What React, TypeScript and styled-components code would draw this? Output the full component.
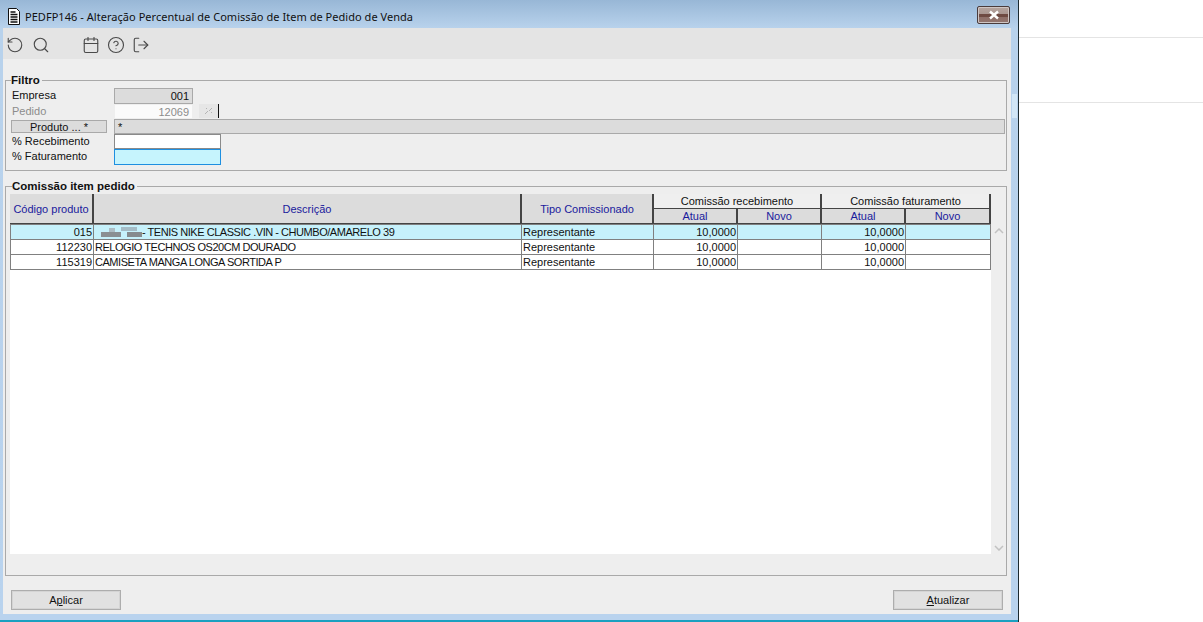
import React from "react";
import styled, { createGlobalStyle } from "styled-components";
import { RotateCcw, Search, Calendar, CircleHelp, LogOut } from "lucide-react";

const Global = createGlobalStyle`
  html, body { margin: 0; padding: 0; background: #fff; }
  * { box-sizing: border-box; }
  body { font-family: "Liberation Sans", Arial, sans-serif; font-size: 11px; color: #111; }
`;

const Page = styled.div`
  display: flex;
  width: 1203px;
  height: 622px;
  overflow: hidden;
`;
const Window = styled.div`
  position: relative;
  flex: 0 0 1019px;
  height: 622px;
  display: flex;
  flex-direction: column;
  padding-bottom: 2px;
  border-right: 1px solid #1c2a30;
  background: linear-gradient(180deg, #98b7d6 0, #b8d2ec 28px, #b9d3ee 100%);
  &::after {
    content: "";
    position: absolute;
    left: 0;
    right: 0;
    bottom: 0;
    height: 2px;
    background: #1aa0c0;
  }
`;
const SideGlint = styled.div`
  position: absolute;
  left: 1012px;
  top: 94px;
  width: 5px;
  height: 24px;
  background: #d2e6f6;
`;
const TitleBar = styled.div`
  flex: 0 0 28px;
  display: flex;
  align-items: center;
  padding: 4px 8px 0 8px;
  gap: 5px;
`;
const TitleText = styled.div`
  flex: 1;
  font-family: "Noto Sans", "Open Sans", sans-serif;
  font-size: 11px;
  letter-spacing: 0.04px;
  color: #111;
`;
const CloseButton = styled.div`
  width: 33px;
  height: 18px;
  margin-top: -3px;
  border: 1px solid #4a3c3c;
  border-radius: 2px;
  box-shadow: inset 0 0 0 1px #cfc6c4;
  background: linear-gradient(180deg, #b5a5a0 0, #a99690 45%, #6e4a42 46%, #6e4a42 62%, #8e6f68 63%, #927670 100%);
  display: flex;
  align-items: center;
  justify-content: center;
`;
const Body = styled.div`
  flex: 1;
  margin: 0 7px 6px 3px;
  background: #eeeeee;
  display: flex;
  flex-direction: column;
  min-height: 0;
`;
const Toolbar = styled.div`
  flex: 0 0 31px;
  background: #e4e4e4;
  display: flex;
  align-items: center;
  padding: 2px 0 0 3px;
  color: #4a4a4a;
`;
const ToolIcon = styled.span<{ $gap?: number }>`
  display: flex;
  width: 18px;
  margin-left: ${(p) => p.$gap ?? 0}px;
  justify-content: center;
`;
const Group = styled.fieldset`
  margin: 0 4px 0 2px;
  padding: 0 0 0 6px;
  border: 1px solid #a9a9a9;
  min-width: 0;
  border-radius: 0;
`;
const Legend = styled.legend`
  padding: 0 2px 0 0;
  margin-left: -1px;
  font-weight: 700;
  font-size: 11.5px;
  line-height: 13px;
  color: #111;
`;
const FilterGroup = styled(Group)`
  margin-top: 15px;
  height: 97px;
  padding-top: 1px;
`;
const FilterRow = styled.div<{ $h: number }>`
  display: flex;
  height: ${(p) => p.$h}px;
`;
const FormLabel = styled.div<{ $off?: boolean }>`
  flex: 0 0 102px;
  line-height: 15px;
  color: ${(p) => (p.$off ? "#8c8c8c" : "#111")};
`;
const Field = styled.div<{ $w: number; $bg: string; $line: string; $color?: string }>`
  flex: ${(p) => (p.$w ? `0 0 ${p.$w}px` : "1")};
  margin-right: ${(p) => (p.$w ? 0 : 1)}px;
  height: 100%;
  background: ${(p) => p.$bg};
  border: 1px solid ${(p) => p.$line};
  color: ${(p) => p.$color ?? "#111"};
  padding: 0 3px;
  line-height: 14px;
`;
const NumField = styled(Field)`
  text-align: right;
`;
const LookupButton = styled.div`
  flex: 0 0 20px;
  margin-left: 6px;
  height: 14px;
  background: #e6e6e6;
  border-right: 1px solid #111;
  display: flex;
  align-items: center;
  justify-content: center;
`;
const ProductButton = styled.div`
  flex: 0 0 96px;
  margin: 1px 7px 1px -1px;
  background: #dcdcdc;
  border: 1px solid #a9a9a9;
  line-height: 12px;
  text-align: center;
`;
const GridGroup = styled(Group)`
  margin-top: 9px;
  height: 396px;
  padding: 0 0 0 4px;
  position: relative;
`;
const GridLegend = styled(Legend)`
  margin-left: 2px;
`;
const HeaderGrid = styled.div`
  display: grid;
  grid-template-columns: 84px 428px 132px 84px 84px 84px 85px;
  grid-template-rows: 15px 15px;
  width: 981px;
  margin-top: 1px;
`;
const HeadCell = styled.div<{ $wide?: boolean }>`
  grid-row: ${(p) => (p.$wide ? "1 / span 2" : "auto")};
  background: #dcdcdc;
  color: #1a1a9c;
  border-right: 2px solid #444;
  border-bottom: 1px solid #444;
  display: flex;
  align-items: center;
  justify-content: center;
`;
const GroupHead = styled.div`
  grid-column: span 2;
  background: #efefef;
  color: #111;
  border-right: 2px solid #444;
  border-bottom: 1px solid #444;
  display: flex;
  align-items: center;
  justify-content: center;
`;
const RowsArea = styled.div`
  display: flex;
  height: 330px;
`;
const Rows = styled.div`
  width: 981px;
  background: #fff;
`;
const ScrollTrack = styled.div`
  flex: 0 0 15px;
  display: flex;
  flex-direction: column;
  justify-content: space-between;
  align-items: center;
  padding: 4px 0 3px;
  color: #c2c2c2;
`;
const Row = styled.div<{ $on?: boolean }>`
  display: grid;
  grid-template-columns: 83px 428px 132px 84px 84px 84px 85px;
  height: 15px;
  width: 981px;
  background: ${(p) => (p.$on ? "#c6f1fb" : "#fff")};
  border-top: 1px solid #808080;
  border-left: 1px solid #808080;
  &:last-child {
    height: 16px;
    border-bottom: 1px solid #808080;
  }
`;
const Cell = styled.div<{ $num?: boolean; $caps?: boolean }>`
  border-right: 1px solid #808080;
  padding: 0 1px;
  line-height: 14px;
  white-space: nowrap;
  overflow: hidden;
  text-align: ${(p) => (p.$num ? "right" : "left")};
  letter-spacing: ${(p) => (p.$caps ? "-0.46px" : "0")};
`;
const Redacted = styled.svg`
  vertical-align: -2px;
  margin: 0 0 0 6px;
`;
const Footer = styled.div`
  flex: 1;
  display: flex;
  justify-content: space-between;
  align-items: flex-start;
  padding: 14px 8px 0;
`;
const ActionButton = styled.div`
  width: 110px;
  height: 20px;
  background: #e1e1e1;
  border: 1px solid #adadad;
  box-shadow: inset 0 0 0 1px #d4d4d4;
  text-align: center;
  line-height: 19px;
  color: #111;
`;
const Under = styled.span`
  text-decoration: underline;
`;
const SidePane = styled.div`
  flex: 1;
  background: #fff;
`;
const SideRow = styled.div<{ $h: number }>`
  height: ${(p) => p.$h}px;
  border-bottom: 1px solid #e4e4e4;
`;

const DocIcon = () => (
  <svg width="12" height="17" viewBox="0 0 12 17">
    <path d="M.5.500h8l3 3v13H.5z" fill="#fff" stroke="#111" />
    <path d="M2.500 4h5M2.500 6.500h7M2.500 9h7M2.500 11.500h7M2.500 14h7" stroke="#111" strokeWidth="1.300" />
  </svg>
);

const rows = [
  { on: true, code: "015", desc: "- TENIS NIKE CLASSIC .VIN - CHUMBO/AMARELO 39", blur: true },
  { code: "112230", desc: "RELOGIO TECHNOS OS20CM DOURADO" },
  { code: "115319", desc: "CAMISETA MANGA LONGA SORTIDA P" },
];

export default function App() {
  return (
    <Page>
      <Global />
      <Window>
        <SideGlint />
        <TitleBar>
          <DocIcon />
          <TitleText>PEDFP146 - Alteração Percentual de Comissão de Item de Pedido de Venda</TitleText>
          <CloseButton>
            <svg width="12" height="10" viewBox="0 0 12 10">
              <path d="M2 1.500l8 7M10 1.500l-8 7" stroke="#fff" strokeWidth="2.400" />
            </svg>
          </CloseButton>
        </TitleBar>
        <Body>
          <Toolbar>
            <ToolIcon><RotateCcw size={18} strokeWidth={1.5} /></ToolIcon>
            <ToolIcon $gap={8}><Search size={18} strokeWidth={1.5} /></ToolIcon>
            <ToolIcon $gap={32}><Calendar size={18} strokeWidth={1.5} /></ToolIcon>
            <ToolIcon $gap={7}><CircleHelp size={18} strokeWidth={1.5} /></ToolIcon>
            <ToolIcon $gap={7}><LogOut size={18} strokeWidth={1.5} /></ToolIcon>
          </Toolbar>
          <FilterGroup>
            <Legend>Filtro</Legend>
            <FilterRow $h={16}>
              <FormLabel>Empresa</FormLabel>
              <NumField $w={79} $bg="#dcdcdc" $line="#a9a9a9">001</NumField>
            </FilterRow>
            <FilterRow $h={15}>
              <FormLabel $off>Pedido</FormLabel>
              <NumField $w={79} $bg="#fafafa" $line="#eeeeee" $color="#8c8c8c">12069</NumField>
              <LookupButton>
                <svg width="10" height="8" viewBox="0 0 10 8">
                  <path d="M1 7l3-3M5 4l3-3M7 6l1-1M2 2l1-1" stroke="#b4b4b4" strokeWidth="1" />
                </svg>
              </LookupButton>
            </FilterRow>
            <FilterRow $h={15}>
              <ProductButton>Produto ... *</ProductButton>
              <Field $w={0} $bg="#dcdcdc" $line="#a9a9a9">*</Field>
            </FilterRow>
            <FilterRow $h={15}>
              <FormLabel>% Recebimento</FormLabel>
              <Field $w={107} $bg="#ffffff" $line="#8a8a8a" />
            </FilterRow>
            <FilterRow $h={16}>
              <FormLabel>% Faturamento</FormLabel>
              <Field $w={107} $bg="#c6f4fd" $line="#1e8fe0" />
            </FilterRow>
          </FilterGroup>
          <GridGroup>
            <GridLegend>Comissão item pedido</GridLegend>
            <HeaderGrid>
              <HeadCell $wide>Código produto</HeadCell>
              <HeadCell $wide>Descrição</HeadCell>
              <HeadCell $wide>Tipo Comissionado</HeadCell>
              <GroupHead>Comissão recebimento</GroupHead>
              <GroupHead>Comissão faturamento</GroupHead>
              <HeadCell>Atual</HeadCell>
              <HeadCell>Novo</HeadCell>
              <HeadCell>Atual</HeadCell>
              <HeadCell>Novo</HeadCell>
            </HeaderGrid>
            <RowsArea>
              <Rows>
                {rows.map((r) => (
                  <Row key={r.code} $on={r.on}>
                    <Cell $num>{r.code}</Cell>
                    <Cell $caps>
                      {r.blur && (
                        <Redacted width="41" height="11" viewBox="0 0 41 11">
                          <rect x="0" y="5" width="20" height="5" fill="#8a8f92" />
                          <rect x="8" y="1" width="6" height="4" fill="#aebdc4" />
                          <rect x="20" y="0" width="16" height="4" fill="#a5bcc6" />
                          <rect x="26" y="5" width="15" height="5" fill="#868b8e" />
                        </Redacted>
                      )}
                      {r.desc}
                    </Cell>
                    <Cell>Representante</Cell>
                    <Cell $num>10,0000</Cell>
                    <Cell />
                    <Cell $num>10,0000</Cell>
                    <Cell />
                  </Row>
                ))}
              </Rows>
              <ScrollTrack>
                <svg width="10" height="6" viewBox="0 0 10 6"><path d="M1 5l4-4 4 4" fill="none" stroke="currentColor" strokeWidth="1.500" /></svg>
                <svg width="10" height="6" viewBox="0 0 10 6"><path d="M1 1l4 4 4-4" fill="none" stroke="currentColor" strokeWidth="1.500" /></svg>
              </ScrollTrack>
            </RowsArea>
          </GridGroup>
          <Footer>
            <ActionButton>A<Under>p</Under>licar</ActionButton>
            <ActionButton><Under>A</Under>tualizar</ActionButton>
          </Footer>
        </Body>
      </Window>
      <SidePane>
        <SideRow $h={38} />
        <SideRow $h={65} />
      </SidePane>
    </Page>
  );
}
